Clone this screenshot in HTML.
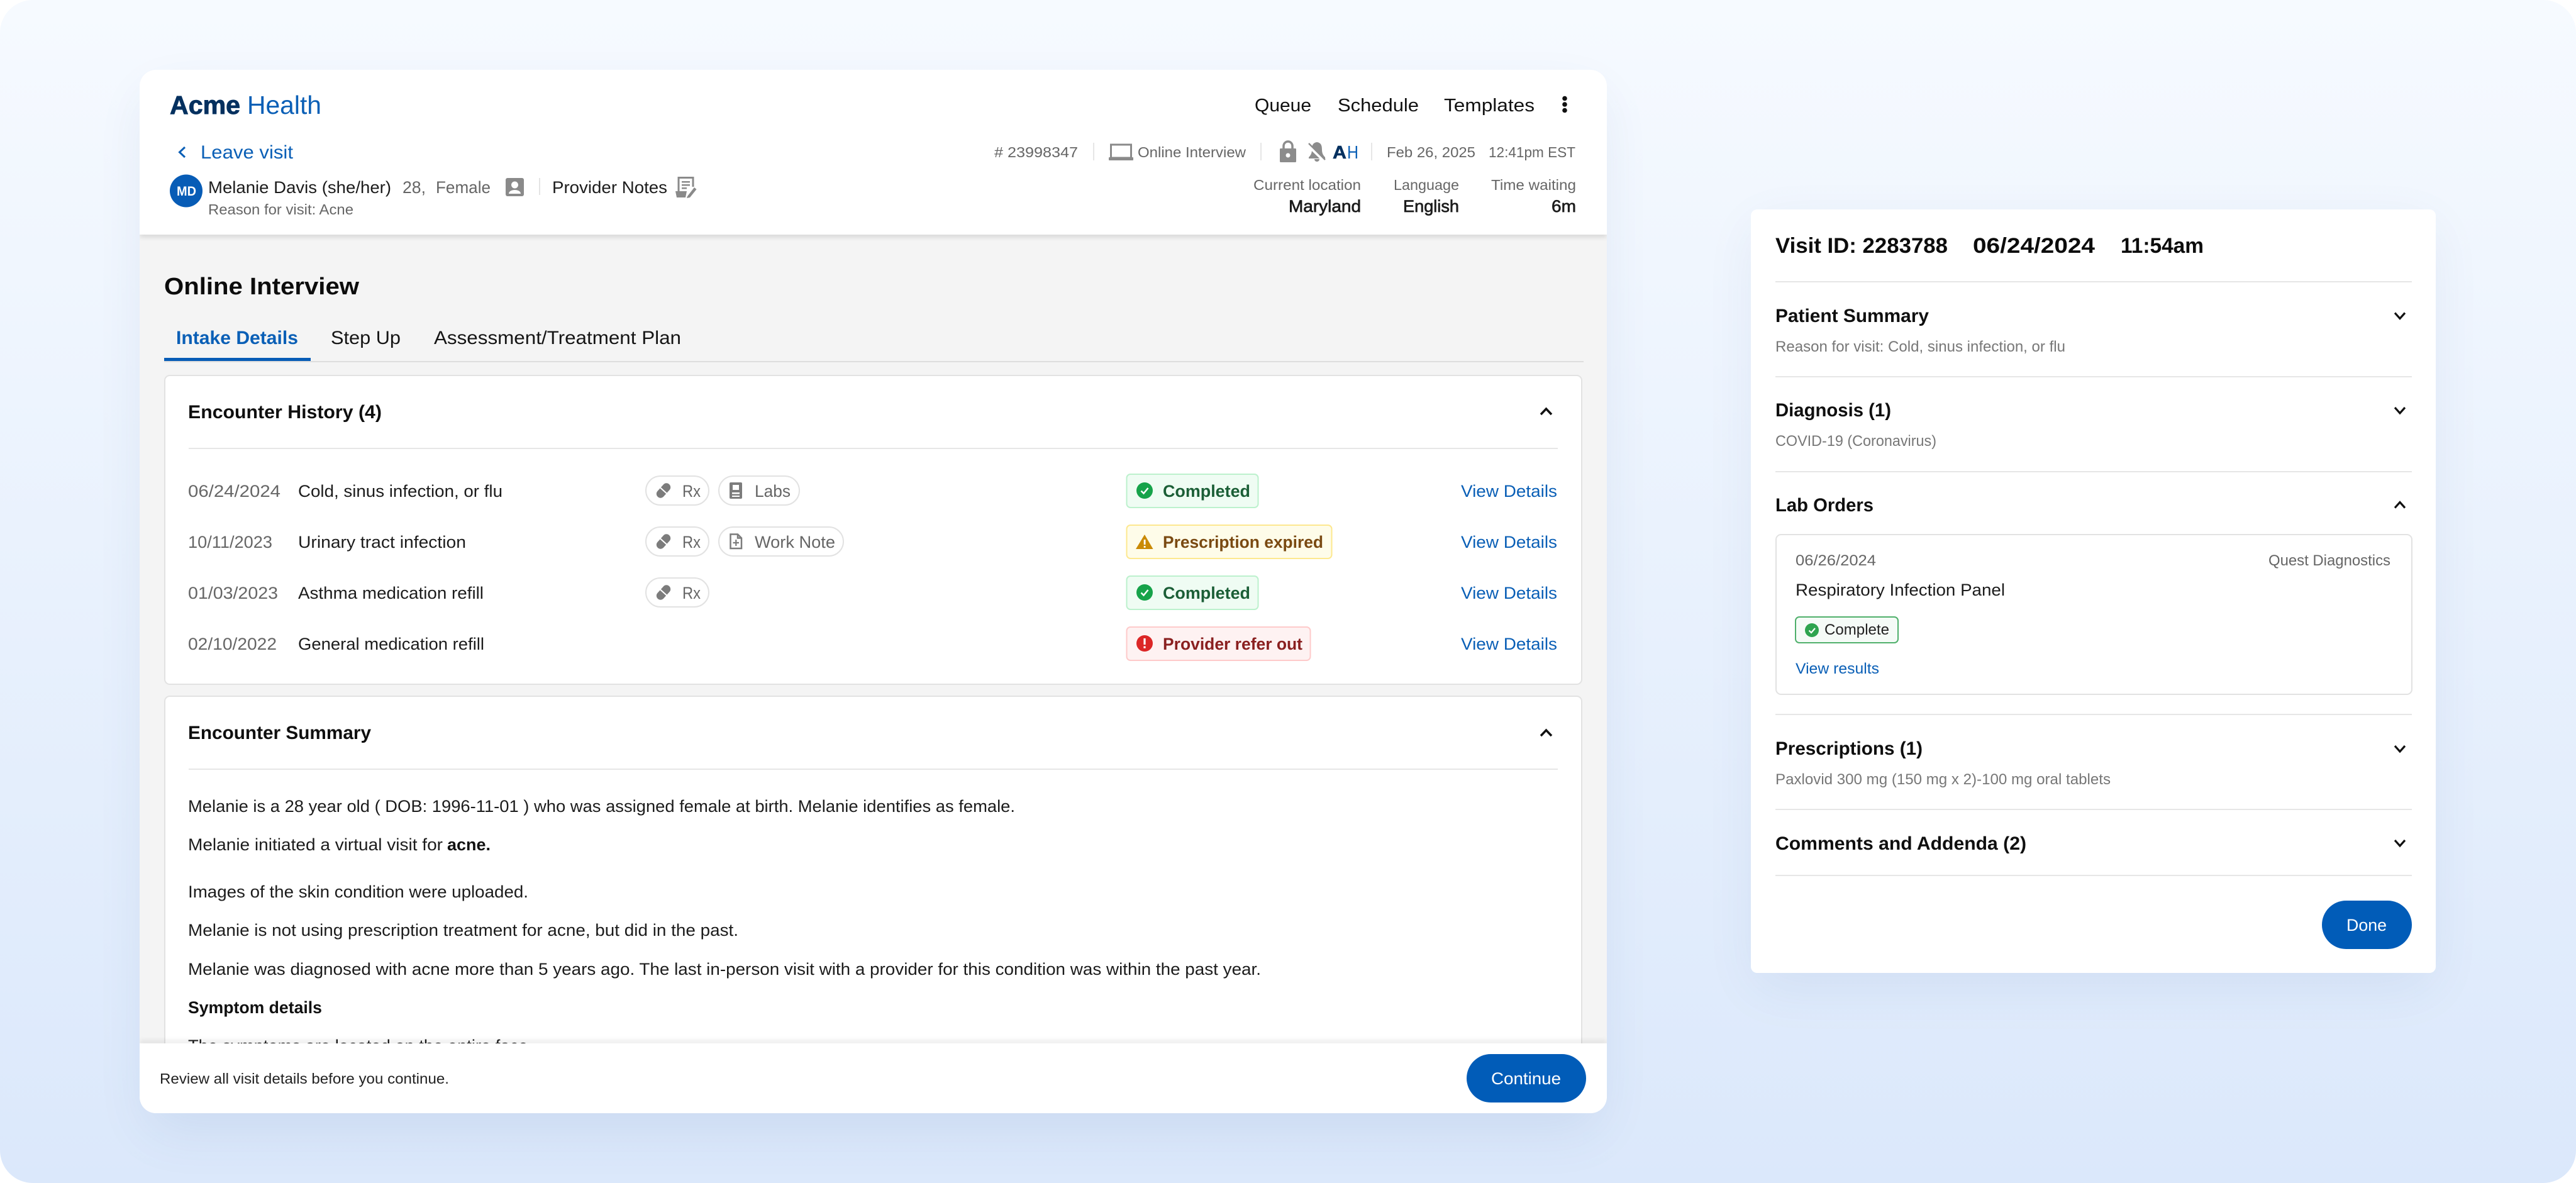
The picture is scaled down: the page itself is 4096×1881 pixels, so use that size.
<!DOCTYPE html>
<html><head><meta charset="utf-8"><title>Acme Health</title>
<style>
html,body{margin:0;padding:0;background:#fff}
svg{display:block}
text{font-family:"Liberation Sans",sans-serif;fill:#1c1c1c;font-size:27px}
.b{font-weight:700}
.h{font-weight:700;font-size:30px;fill:#0f0f0f}
.g{fill:#666}
.s{font-size:23px;fill:#666}
.s2{font-size:24px;fill:#777}
.l{fill:#0a5fb6}
.nav{font-size:29px;fill:#111}
.line{fill:#e6e6e6}
.ic{fill:#7c7c7c}
.ics{fill:none;stroke:#7c7c7c}
</style></head><body>
<svg xmlns="http://www.w3.org/2000/svg" width="4096" height="1881" viewBox="0 0 4096 1881">
<defs>
<linearGradient id="bg" x1="0" y1="0" x2="0" y2="1"><stop offset="0" stop-color="#f6faff"/><stop offset="1" stop-color="#dbe8fb"/></linearGradient>
<filter id="sh" x="-20%" y="-20%" width="140%" height="140%"><feGaussianBlur stdDeviation="42"/></filter>
<filter id="sm" x="-5%" y="-200%" width="110%" height="500%"><feGaussianBlur stdDeviation="4"/></filter>
<clipPath id="cc"><rect x="222" y="111" width="2333" height="1659" rx="26"/></clipPath>
</defs>
<rect width="4096" height="1881" rx="52" fill="url(#bg)"/>

<!-- shadows -->
<rect x="232" y="150" width="2313" height="1650" rx="30" fill="#12408a" opacity=".085" filter="url(#sh)"/>
<rect x="2790" y="360" width="1077" height="1210" rx="20" fill="#12408a" opacity=".075" filter="url(#sh)"/>

<!-- main card -->
<g clip-path="url(#cc)">
<rect x="222" y="111" width="2333" height="1659" fill="#f4f4f4"/>
<rect x="222" y="368" width="2333" height="9" fill="#000" opacity=".12" filter="url(#sm)"/>
<rect x="222" y="111" width="2333" height="262" fill="#fff"/>

<!-- logo -->
<text x="270" y="181" class="b" style="font-size:41px;fill:#04305f;stroke:#04305f;stroke-width:.9" textLength="112" lengthAdjust="spacingAndGlyphs">Acme</text>
<text x="393" y="181" style="font-size:41px;fill:#0a5fb6" textLength="118" lengthAdjust="spacingAndGlyphs">Health</text>

<!-- nav -->
<text x="1995" y="177" class="nav" textLength="90" lengthAdjust="spacingAndGlyphs">Queue</text>
<text x="2127" y="177" class="nav" textLength="129" lengthAdjust="spacingAndGlyphs">Schedule</text>
<text x="2296" y="177" class="nav" textLength="144" lengthAdjust="spacingAndGlyphs">Templates</text>
<circle cx="2488" cy="156.500" r="3.800" fill="#111"/><circle cx="2488" cy="166" r="3.800" fill="#111"/><circle cx="2488" cy="175.500" r="3.800" fill="#111"/>

<!-- leave visit -->
<path d="M294 234 L285.500 242 L294 250" fill="none" stroke="#0a5fb6" stroke-width="3"/>
<text x="319" y="252" class="l" style="font-size:30px" textLength="147" lengthAdjust="spacingAndGlyphs">Leave visit</text>

<!-- patient -->
<circle cx="296" cy="303.500" r="26" fill="#075cb6"/>
<text x="281" y="311" class="b" style="font-size:21px;fill:#fff" textLength="31" lengthAdjust="spacingAndGlyphs">MD</text>
<text x="331" y="307" textLength="291" lengthAdjust="spacingAndGlyphs">Melanie Davis (she/her)</text>
<text x="640" y="307" class="g" textLength="37" lengthAdjust="spacingAndGlyphs">28,</text>
<text x="693" y="307" class="g" textLength="87" lengthAdjust="spacingAndGlyphs">Female</text>
<rect x="804" y="283" width="29" height="29" rx="3" fill="#8a8a8a"/>
<circle cx="818.500" cy="294" r="5.500" fill="#fff"/>
<path d="M809 308 C809 300 828 300 828 308 Z" fill="#fff"/>
<rect x="857" y="283" width="2" height="27" fill="#e4e4e4"/>
<text x="878" y="307" textLength="183" lengthAdjust="spacingAndGlyphs">Provider Notes</text>
<path d="M1079 305 V282.500 H1102 V297" fill="none" stroke="#8a8a8a" stroke-width="3"/>
<rect x="1084" y="288" width="13" height="2.500" fill="#8a8a8a"/><rect x="1084" y="293" width="13" height="2.500" fill="#8a8a8a"/><rect x="1084" y="298" width="8" height="2.500" fill="#8a8a8a"/>
<path d="M1074 304 H1092 L1090 314 H1076 Z" fill="#8a8a8a"/>
<path d="M1093 312 L1104 298 L1107.500 301 L1097 314 L1092 315 Z" fill="#8a8a8a"/>
<text x="331" y="341" class="s" textLength="231" lengthAdjust="spacingAndGlyphs">Reason for visit: Acne</text>

<!-- meta -->
<text x="1581" y="250" class="s" textLength="133" lengthAdjust="spacingAndGlyphs"># 23998347</text>
<rect x="1738" y="227" width="2" height="28" fill="#e6e6e6"/>
<rect x="1766.500" y="230" width="32" height="21" fill="none" stroke="#8a8a8a" stroke-width="3"/>
<rect x="1763" y="250" width="39" height="5" rx="1" fill="#8a8a8a"/>
<text x="1809" y="250" class="s" textLength="172" lengthAdjust="spacingAndGlyphs">Online Interview</text>
<rect x="2004" y="227" width="2" height="28" fill="#e6e6e6"/>
<path d="M2041 236 V232 A7 7 0 0 1 2055 232 V236" fill="none" stroke="#8c8c8c" stroke-width="3.500"/>
<rect x="2035" y="236" width="26" height="22" rx="1.500" fill="#8c8c8c"/>
<circle cx="2048" cy="247" r="3.500" fill="#fff"/>
<path d="M2094 226 C2087 227 2086 232 2086 238 C2086 245 2083 248 2081 250 V252 H2107 V250 C2105 248 2102 245 2102 238 C2102 232 2101 227 2094 226 Z" fill="#8c8c8c"/>
<path d="M2090 253 H2098 A4 4 0 0 1 2090 253 Z" fill="#8c8c8c"/>
<path d="M2079 230 L2106 256" stroke="#fff" stroke-width="5"/>
<path d="M2081 228 L2107 254" stroke="#8c8c8c" stroke-width="2.500"/>
<text x="2119" y="252" class="b" style="font-size:29px;fill:#04305f;stroke:#04305f;stroke-width:.6" textLength="22" lengthAdjust="spacingAndGlyphs">A</text>
<text x="2142" y="252" style="font-size:29px;fill:#0a5fb6" textLength="18" lengthAdjust="spacingAndGlyphs">H</text>
<rect x="2180" y="227" width="2" height="28" fill="#e6e6e6"/>
<text x="2205" y="250" class="s" textLength="141" lengthAdjust="spacingAndGlyphs">Feb 26, 2025</text>
<text x="2367" y="250" class="s" textLength="138" lengthAdjust="spacingAndGlyphs">12:41pm EST</text>
<text x="1993" y="302" class="s" textLength="171" lengthAdjust="spacingAndGlyphs">Current location</text>
<text x="2216" y="302" class="s" textLength="104" lengthAdjust="spacingAndGlyphs">Language</text>
<text x="2371" y="302" class="s" textLength="135" lengthAdjust="spacingAndGlyphs">Time waiting</text>
<text x="2049" y="337" style="stroke:#1c1c1c;stroke-width:.7" textLength="115" lengthAdjust="spacingAndGlyphs">Maryland</text>
<text x="2231" y="337" style="stroke:#1c1c1c;stroke-width:.7" textLength="89" lengthAdjust="spacingAndGlyphs">English</text>
<text x="2467" y="337" style="stroke:#1c1c1c;stroke-width:.7" textLength="39" lengthAdjust="spacingAndGlyphs">6m</text>

<!-- title & tabs -->
<text x="261" y="468" class="b" style="font-size:38px;fill:#0c0c0c" textLength="310" lengthAdjust="spacingAndGlyphs">Online Interview</text>
<text x="280" y="547" class="b l" style="font-size:30px" textLength="194" lengthAdjust="spacingAndGlyphs">Intake Details</text>
<text x="526" y="547" style="font-size:30px;fill:#151515" textLength="111" lengthAdjust="spacingAndGlyphs">Step Up</text>
<text x="690" y="547" style="font-size:30px;fill:#151515" textLength="393" lengthAdjust="spacingAndGlyphs">Assessment/Treatment Plan</text>
<rect x="261" y="574" width="2257" height="2" fill="#dedede"/>
<rect x="261" y="569" width="233" height="5" fill="#075cb6"/>

<!-- encounter history -->
<rect x="262" y="597" width="2253" height="491" rx="8" fill="#fff" stroke="#e2e2e2" stroke-width="2"/>
<text x="299" y="665" class="h" textLength="308" lengthAdjust="spacingAndGlyphs">Encounter History (4)</text>
<path d="M2450 659 L2458.500 650 L2467 659" fill="none" stroke="#111" stroke-width="3.500"/>
<rect x="300" y="712" width="2177" height="2" class="line"/>

<text x="299" y="790" class="g" textLength="147" lengthAdjust="spacingAndGlyphs">06/24/2024</text>
<text x="474" y="790" textLength="325" lengthAdjust="spacingAndGlyphs">Cold, sinus infection, or flu</text>
<text x="299" y="871" class="g" textLength="134" lengthAdjust="spacingAndGlyphs">10/11/2023</text>
<text x="474" y="871" textLength="267" lengthAdjust="spacingAndGlyphs">Urinary tract infection</text>
<text x="299" y="952" class="g" textLength="143" lengthAdjust="spacingAndGlyphs">01/03/2023</text>
<text x="474" y="952" textLength="295" lengthAdjust="spacingAndGlyphs">Asthma medication refill</text>
<text x="299" y="1033" class="g" textLength="141" lengthAdjust="spacingAndGlyphs">02/10/2022</text>
<text x="474" y="1033" textLength="296" lengthAdjust="spacingAndGlyphs">General medication refill</text>

<!-- pills -->
<g fill="#fff" stroke="#e2e2e2" stroke-width="2">
<rect x="1027" y="757" width="100" height="46" rx="23"/>
<rect x="1143" y="757" width="128" height="46" rx="23"/>
<rect x="1027" y="838" width="100" height="46" rx="23"/>
<rect x="1143" y="838" width="198" height="46" rx="23"/>
<rect x="1027" y="919" width="100" height="46" rx="23"/>
</g>
<g transform="rotate(42 1055 780)"><rect x="1048.500" y="766.500" width="13" height="27" rx="6.500" class="ic"/><rect x="1047" y="779" width="16" height="2" fill="#fff"/></g>
<g transform="rotate(42 1055 861)"><rect x="1048.500" y="847.500" width="13" height="27" rx="6.500" class="ic"/><rect x="1047" y="860" width="16" height="2" fill="#fff"/></g>
<g transform="rotate(42 1055 942)"><rect x="1048.500" y="928.500" width="13" height="27" rx="6.500" class="ic"/><rect x="1047" y="941" width="16" height="2" fill="#fff"/></g>
<text x="1085" y="790" class="g" textLength="29" lengthAdjust="spacingAndGlyphs">Rx</text>
<text x="1085" y="871" class="g" textLength="29" lengthAdjust="spacingAndGlyphs">Rx</text>
<text x="1085" y="952" class="g" textLength="29" lengthAdjust="spacingAndGlyphs">Rx</text>
<rect x="1160" y="767" width="20" height="26" rx="2" class="ic"/>
<rect x="1165" y="771" width="10" height="8" fill="#fff"/>
<rect x="1164" y="783" width="12" height="2.500" fill="#fff"/><rect x="1164" y="788" width="12" height="2" fill="#fff"/>
<text x="1200" y="790" class="g" textLength="57" lengthAdjust="spacingAndGlyphs">Labs</text>
<path d="M1161.500 849.500 H1173 L1179 855.500 V872 H1161.500 Z M1173 849.500 V855.500 H1179" class="ics" stroke-width="2.500"/>
<path d="M1170.300 858 V868 M1165.500 863 H1175" class="ics" stroke-width="2.200"/>
<text x="1200" y="871" class="g" textLength="128" lengthAdjust="spacingAndGlyphs">Work Note</text>

<!-- badges -->
<rect x="1791.500" y="754" width="209" height="53" rx="6" fill="#effcf3" stroke="#bcf1cd" stroke-width="2"/>
<circle cx="1820" cy="780" r="13" fill="#16a34a"/>
<path d="M1814.500 780.500 L1818.500 784.500 L1825.500 776" fill="none" stroke="#fff" stroke-width="2.500"/>
<text x="1849" y="790" class="b" style="fill:#1b5e36" textLength="139" lengthAdjust="spacingAndGlyphs">Completed</text>

<rect x="1791.500" y="835" width="326" height="53" rx="6" fill="#fefce9" stroke="#fde88f" stroke-width="2"/>
<path d="M1820 850 L1833.500 873 H1806 Z" fill="#ca8a04"/>
<rect x="1818.700" y="858" width="2.800" height="8" fill="#fff"/><rect x="1818.700" y="868" width="2.800" height="2.800" fill="#fff"/>
<text x="1849" y="871" class="b" style="fill:#7a4a12" textLength="255" lengthAdjust="spacingAndGlyphs">Prescription expired</text>

<rect x="1791.500" y="916" width="209" height="53" rx="6" fill="#effcf3" stroke="#bcf1cd" stroke-width="2"/>
<circle cx="1820" cy="942" r="13" fill="#16a34a"/>
<path d="M1814.500 942.500 L1818.500 946.500 L1825.500 938" fill="none" stroke="#fff" stroke-width="2.500"/>
<text x="1849" y="952" class="b" style="fill:#1b5e36" textLength="139" lengthAdjust="spacingAndGlyphs">Completed</text>

<rect x="1791.500" y="997" width="292" height="53" rx="6" fill="#fef2f2" stroke="#fecaca" stroke-width="2"/>
<circle cx="1820" cy="1023" r="13" fill="#dc2626"/>
<rect x="1818.400" y="1015" width="3.200" height="10" fill="#fff"/><rect x="1818.400" y="1027.500" width="3.200" height="3.200" fill="#fff"/>
<text x="1849" y="1033" class="b" style="fill:#8a2020" textLength="222" lengthAdjust="spacingAndGlyphs">Provider refer out</text>

<text x="2323" y="790" class="l" textLength="153" lengthAdjust="spacingAndGlyphs">View Details</text>
<text x="2323" y="871" class="l" textLength="153" lengthAdjust="spacingAndGlyphs">View Details</text>
<text x="2323" y="952" class="l" textLength="153" lengthAdjust="spacingAndGlyphs">View Details</text>
<text x="2323" y="1033" class="l" textLength="153" lengthAdjust="spacingAndGlyphs">View Details</text>

<!-- encounter summary -->
<rect x="262" y="1107" width="2253" height="700" rx="8" fill="#fff" stroke="#e2e2e2" stroke-width="2"/>
<text x="299" y="1175" class="h" textLength="291" lengthAdjust="spacingAndGlyphs">Encounter Summary</text>
<path d="M2450 1170 L2458.500 1161 L2467 1170" fill="none" stroke="#111" stroke-width="3.500"/>
<rect x="300" y="1222" width="2177" height="2" class="line"/>
<text x="299" y="1291" textLength="1315" lengthAdjust="spacingAndGlyphs">Melanie is a 28 year old ( DOB: 1996-11-01 ) who was assigned female at birth. Melanie identifies as female.</text>
<text x="299" y="1352" textLength="405" lengthAdjust="spacingAndGlyphs">Melanie initiated a virtual visit for</text>
<text x="711" y="1352" class="b" style="fill:#111" textLength="69" lengthAdjust="spacingAndGlyphs">acne.</text>
<text x="299" y="1427" textLength="541" lengthAdjust="spacingAndGlyphs">Images of the skin condition were uploaded.</text>
<text x="299" y="1488" textLength="875" lengthAdjust="spacingAndGlyphs">Melanie is not using prescription treatment for acne, but did in the past.</text>
<text x="299" y="1550" textLength="1706" lengthAdjust="spacingAndGlyphs">Melanie was diagnosed with acne more than 5 years ago. The last in-person visit with a provider for this condition was within the past year.</text>
<text x="299" y="1611" class="b" style="fill:#111" textLength="213" lengthAdjust="spacingAndGlyphs">Symptom details</text>
<text x="299" y="1672" textLength="548" lengthAdjust="spacingAndGlyphs">The symptoms are located on the entire face.</text>

<!-- footer -->
<rect x="222" y="1654" width="2333" height="7" fill="#000" opacity=".08" filter="url(#sm)"/>
<rect x="222" y="1659" width="2333" height="111" fill="#fff"/>
<text x="254" y="1723" style="font-size:23px;fill:#222" textLength="460" lengthAdjust="spacingAndGlyphs">Review all visit details before you continue.</text>
<rect x="2332" y="1676" width="190" height="77" rx="38.500" fill="#015cb8"/>
<text x="2371" y="1724" style="fill:#fff" textLength="111" lengthAdjust="spacingAndGlyphs">Continue</text>
</g>

<!-- right panel -->
<rect x="2784" y="333" width="1089" height="1214" rx="10" fill="#fff"/>
<text x="2823" y="402" class="b" style="font-size:34px;fill:#0c0c0c" textLength="274" lengthAdjust="spacingAndGlyphs">Visit ID: 2283788</text>
<text x="3137" y="402" class="b" style="font-size:34px;fill:#0c0c0c" textLength="194" lengthAdjust="spacingAndGlyphs">06/24/2024</text>
<text x="3372" y="402" class="b" style="font-size:34px;fill:#0c0c0c" textLength="132" lengthAdjust="spacingAndGlyphs">11:54am</text>
<rect x="2823" y="447" width="1012" height="2" class="line"/>

<text x="2823" y="512" class="h" textLength="244" lengthAdjust="spacingAndGlyphs">Patient Summary</text>
<path d="M3808 497.500 L3816 506.500 L3824 497.500" fill="none" stroke="#111" stroke-width="3.200"/>
<text x="2823" y="559" class="s2" textLength="461" lengthAdjust="spacingAndGlyphs">Reason for visit: Cold, sinus infection, or flu</text>
<rect x="2823" y="598" width="1012" height="2" class="line"/>

<text x="2823" y="662" class="h" textLength="184" lengthAdjust="spacingAndGlyphs">Diagnosis (1)</text>
<path d="M3808 648 L3816 657 L3824 648" fill="none" stroke="#111" stroke-width="3.200"/>
<text x="2823" y="709" class="s2" textLength="256" lengthAdjust="spacingAndGlyphs">COVID-19 (Coronavirus)</text>
<rect x="2823" y="749" width="1012" height="2" class="line"/>

<text x="2823" y="813" class="h" textLength="156" lengthAdjust="spacingAndGlyphs">Lab Orders</text>
<path d="M3808 807.500 L3816 798.500 L3824 807.500" fill="none" stroke="#111" stroke-width="3.200"/>

<rect x="2824" y="850" width="1011" height="254" rx="8" fill="#fff" stroke="#e2e2e2" stroke-width="2"/>
<text x="2855" y="899" class="s2" style="fill:#666" textLength="128" lengthAdjust="spacingAndGlyphs">06/26/2024</text>
<text x="3607" y="899" class="s2" style="fill:#666" textLength="194" lengthAdjust="spacingAndGlyphs">Quest Diagnostics</text>
<text x="2855" y="947" textLength="333" lengthAdjust="spacingAndGlyphs">Respiratory Infection Panel</text>
<rect x="2855" y="981" width="163" height="41" rx="6" fill="#f5fbf7" stroke="#4fb06b" stroke-width="2"/>
<circle cx="2881" cy="1002" r="11" fill="#2ea44f"/>
<path d="M2876.500 1002.500 L2880 1006 L2886 999" fill="none" stroke="#fff" stroke-width="2.200"/>
<text x="2901" y="1009" style="font-size:24px;fill:#222" textLength="103" lengthAdjust="spacingAndGlyphs">Complete</text>
<text x="2855" y="1071" class="l" style="font-size:24px" textLength="133" lengthAdjust="spacingAndGlyphs">View results</text>
<rect x="2823" y="1135" width="1012" height="2" class="line"/>

<text x="2823" y="1200" class="h" textLength="234" lengthAdjust="spacingAndGlyphs">Prescriptions (1)</text>
<path d="M3808 1186 L3816 1195 L3824 1186" fill="none" stroke="#111" stroke-width="3.200"/>
<text x="2823" y="1247" class="s2" textLength="533" lengthAdjust="spacingAndGlyphs">Paxlovid 300 mg (150 mg x 2)-100 mg oral tablets</text>
<rect x="2823" y="1286" width="1012" height="2" class="line"/>

<text x="2823" y="1351" class="h" textLength="399" lengthAdjust="spacingAndGlyphs">Comments and Addenda (2)</text>
<path d="M3808 1336 L3816 1345 L3824 1336" fill="none" stroke="#111" stroke-width="3.200"/>
<rect x="2823" y="1391" width="1012" height="2" class="line"/>

<rect x="3692" y="1432" width="143" height="77" rx="38.500" fill="#015cb8"/>
<text x="3731" y="1480" style="fill:#fff" textLength="64" lengthAdjust="spacingAndGlyphs">Done</text>
</svg>
</body></html>
